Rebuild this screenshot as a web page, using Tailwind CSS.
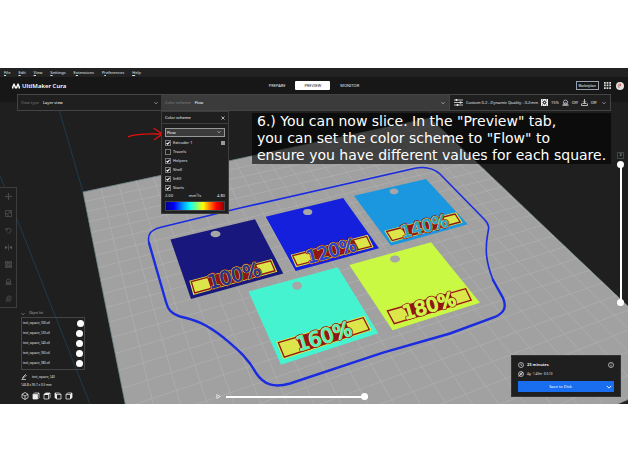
<!DOCTYPE html>
<html lang="en">
  <head>
    <meta charset="UTF-8" />
    <meta name="viewport" content="width=device-width, initial-scale=1.0" />
    <title>UltiMaker Cura</title>
    <script src="https://cdn.jsdelivr.net/npm/@tailwindcss/browser@4"></script>
  </head>
  <body class="flex h-screen flex-col overflow-hidden bg-white py-17 font-['Noto_Sans',sans-serif] text-[4px]/[6px] text-gray-200">
    <!-- shared icon shapes -->
    <svg class="hidden">
      <symbol id="chevron" viewBox="0 0 8 8"><path d="M1 2.5 4 5.5 7 2.5" fill="none" stroke="currentColor" stroke-width="1.2" /></symbol>
      <symbol id="check" viewBox="0 0 8 8"><path d="M2 4 3.5 5.6 6.2 2.3" fill="none" stroke="currentColor" stroke-width="1.4" /></symbol>
      <symbol id="support" viewBox="0 0 16 16"><path d="M4 10.5a5 5 0 1 1 8 0M1.5 14.5 4 10.5h2.5v-2h3v2H12l2.5 4zM5 14.5v-2h6v2" fill="none" stroke="currentColor" stroke-width="1.5" /></symbol>
    </svg>

    <div class="relative flex min-h-0 flex-1 flex-col overflow-hidden bg-[#1f1f1f]">
      <!-- build plate -->
      <svg class="absolute inset-0 size-full" viewBox="0 68 628 336" preserveAspectRatio="xMidYMid slice">
        <defs>
          <clipPath id="plate"><path d="M83 192 430 118 695 370 165 604Z" /></clipPath>
        </defs>
        <g stroke="#1d4356" stroke-width=".8" fill="none">
          <path d="M0 176 90 404M58 106 83 192M430 106v12" />
        </g>
        <path d="M83 192 430 118 695 370 165 604Z" fill="#a1a1a1" stroke="#6f878b" stroke-width=".8" />
        <g id="grid" clip-path="url(#plate)" stroke="#aeaeae" stroke-width=".8"></g>

        <g fill="none" stroke="#1a2be0" stroke-linecap="round">
          <path stroke-width="1.6" d="M149 243C147 234 151 230 160 227.5L240 208 414 168.5C425 166 433 168 440 174L484 219C490 225 489 228 487.5 235C485 250 486 262 493 280" />
          <path stroke-width="2.4" d="M493 280 503 298C507 307 504 313 495 317L450 333.5 383 352.7 290 383.5C274 388 264 385 256 373C248 358 238 350 224 338C205 323 195 320 180 316.5C170 313 168 309 166 302L149 243" />
        </g>

        <path d="M170.5 239.5 255 219.3 283.3 273.5 191 299Z" fill="#17177d" />
        <path d="M265.7 216.7 343.2 198 379 248.3 295.6 271Z" fill="#1520dc" />
        <path d="M354 195.7 426 179 467.7 224.3 391 245.7Z" fill="#1b97df" />
        <path d="M248.5 291.5 337.7 267.3 378.3 333.3 281 364.7Z" fill="#45f3d0" />
        <path d="M349.3 265 431 242.3 480 302.7 392.5 330.3Z" fill="#c9f943" />
        <g fill="#a6a6a6">
          <ellipse cx="215.5" cy="234" rx="5" ry="3.3" />
          <ellipse cx="307.7" cy="212" rx="4.6" ry="3.1" />
          <ellipse cx="394" cy="191.3" rx="4.3" ry="2.9" />
          <ellipse cx="297" cy="285.7" rx="4.8" ry="4" />
          <ellipse cx="395" cy="259" rx="5" ry="3.5" />
        </g>

        <!-- label strips: yellow base, red inset line, red block behind the digits -->
        <g fill="#dce64a">
          <path d="M189.3 280.7 271.7 259 277.3 271.7 193.3 295Z" />
          <path d="M290.7 254.7 367.6 234.7 373.6 247.3 296 267.3Z" />
          <path d="M384.3 230.7 456 212.3 462.7 222.7 391.3 242.3Z" />
          <path d="M276 341.7 364.3 315.7 371.7 330.3 283.3 359.3Z" />
          <path d="M385 310 466.6 286.7 473.8 301 393.3 325.5Z" />
        </g>
        <g fill="none" stroke="#8f1613" stroke-width="1.3">
          <path d="M191.3 281.7 270.7 260.8 275 270.7 194.7 293Z" />
          <path d="M292.7 255.7 366.6 236.4 371.3 246.3 297.2 265.3Z" />
          <path d="M386.6 231.5 455 214 460.2 222 392.2 240.6Z" />
          <path d="M278.3 342.6 363.3 317.7 369.3 329.5 284.3 357.2Z" />
          <path d="M387.4 311 465.6 288.7 471.2 300.1 394.3 323.6Z" />
        </g>
        <g fill="#8f1613">
          <path d="M207 277 256 264.5 261 275 211 288.5Z" />
          <path d="M309 251.5 354 240 359 249.5 314 261.5Z" />
          <path d="M401 228 443 217 448 225.5 407 236.5Z" />
          <path d="M296 337.5 346 323 352 335.5 302 351Z" />
          <path d="M403 306.5 450 293 456 305 410 319Z" />
        </g>
        <g class="font-['DejaVu_Sans',sans-serif]" text-anchor="middle" paint-order="stroke" stroke-linejoin="round">
          <g id="labels"></g>
        </g>

        <!-- pointer to the drop-down -->
        <path d="M128.5 136.7C138 133 150 134 162 134M154 128.5 162.5 134 154.5 139.5" fill="none" stroke="#e01010" stroke-width="1.4" stroke-linecap="round" />
      </svg>

      <nav class="relative flex h-[9px] shrink-0 items-center gap-2 bg-[#222] px-1">
        <a href="#"><u>F</u>ile</a>
        <a href="#"><u>E</u>dit</a>
        <a href="#"><u>V</u>iew</a>
        <a href="#"><u>S</u>ettings</a>
        <a href="#">E<u>x</u>tensions</a>
        <a href="#">P<u>r</u>eferences</a>
        <a href="#"><u>H</u>elp</a>
      </nav>

      <header class="relative grid h-[25px] shrink-0 grid-cols-[1fr_auto_1fr] items-center bg-[#171717] px-1 pb-2">
        <div class="flex items-center gap-0.5 pl-2 text-[6px]/[8px] font-semibold text-white">
          <svg class="h-[6px] w-2" viewBox="0 0 16 12"><path d="M0 11V8L3 1h2l3 7 3-7h2l3 7v3h-3V8l-1-2-2 5H6L4 6 3 8v3z" fill="#fff" /></svg>
          UltiMaker Cura
        </div>
        <div class="flex items-center gap-[10px]">
          <button>PREPARE</button>
          <button class="h-[9px] rounded-[1px] bg-white px-[9px] text-[#222]">PREVIEW</button>
          <button>MONITOR</button>
        </div>
        <div class="flex items-center justify-end gap-[5px]">
          <button class="h-[9px] border border-gray-400 px-0.5 text-[3px]/[6px] text-white">Marketplace</button>
          <button aria-label="Apps">
            <svg class="size-[7px]" viewBox="0 0 14 14" fill="#ddd"><path d="M0 0h3.5v3.5H0zM5.2 0h3.5v3.5H5.2zM10.5 0H14v3.5h-3.5zM0 5.2h3.5v3.5H0zM5.2 5.2h3.5v3.5H5.2zM10.5 5.2H14v3.5h-3.5zM0 10.5h3.5V14H0zM5.2 10.5h3.5V14H5.2zM10.5 10.5H14V14h-3.5z" /></svg>
          </button>
          <button aria-label="Account">
            <svg class="size-2" viewBox="0 0 16 16"><circle cx="8" cy="8" r="8" fill="#e5e2df" /><path d="M3 6c2-4 6-4 7-1L7 9l1 4-4-2z" fill="#b9a199" /><path d="M8 2l2 5-2 1z" fill="#d33" /></svg>
          </button>
        </div>
      </header>

      <div class="relative z-10 mx-[17px] -mt-2 flex h-[17px] shrink-0 border border-[#444] bg-[#1f1f1f]">
        <button class="flex w-[143px] items-center gap-1 px-[3px]">
          <span class="text-[#777]">View type</span>
          <span class="text-white">Layer view</span>
          <svg class="ml-auto size-1"><use href="#chevron" /></svg>
        </button>
        <div class="relative flex flex-1 bg-[#3b3b3b]">
          <button class="flex flex-1 items-center gap-1 px-1">
            <span class="text-[#858585]">Color scheme</span>
            <span class="text-white">Flow</span>
            <svg class="ml-auto size-1"><use href="#chevron" /></svg>
          </button>

          <div class="absolute top-full left-0 mt-px w-17 border border-[#3d3d3d] bg-[#1f1f1f] pb-0.5">
            <div class="flex h-3 items-center justify-between border-b border-[#3d3d3d] px-[3px]">
              <span class="text-white">Color scheme</span>
              <button aria-label="Close"><svg class="size-1" viewBox="0 0 8 8"><path d="M1 1l6 6M7 1 1 7" stroke="#ddd" stroke-width="1.5" /></svg></button>
            </div>
            <div class="flex flex-col px-[3px] pt-1">
              <div class="relative mb-px h-[9px]">
                <select aria-label="Color scheme" class="block size-full appearance-none border border-[#999] bg-[#3b3b3b] px-px text-[4px]/[6px] text-white">
                  <option>Flow</option>
                </select>
                <svg class="pointer-events-none absolute top-[2px] right-1 size-1"><use href="#chevron" /></svg>
              </div>
              <label class="flex h-[9px] items-center gap-0.5">
                <span class="relative size-1.5"><input type="checkbox" checked class="peer block size-1.5 appearance-none border border-[#777]" /><svg class="pointer-events-none absolute inset-0 hidden size-1.5 text-white peer-checked:block"><use href="#check" /></svg></span>
                Extruder 1
                <span class="ml-auto size-1 bg-[#999]"></span>
              </label>
              <label class="flex h-[9px] items-center gap-0.5">
                <span class="relative size-1.5"><input type="checkbox" class="peer block size-1.5 appearance-none border border-[#777]" /><svg class="pointer-events-none absolute inset-0 hidden size-1.5 text-white peer-checked:block"><use href="#check" /></svg></span>
                Travels
              </label>
              <label class="flex h-[9px] items-center gap-0.5">
                <span class="relative size-1.5"><input type="checkbox" checked class="peer block size-1.5 appearance-none border border-[#777]" /><svg class="pointer-events-none absolute inset-0 hidden size-1.5 text-white peer-checked:block"><use href="#check" /></svg></span>
                Helpers
              </label>
              <label class="flex h-[9px] items-center gap-0.5">
                <span class="relative size-1.5"><input type="checkbox" checked class="peer block size-1.5 appearance-none border border-[#777]" /><svg class="pointer-events-none absolute inset-0 hidden size-1.5 text-white peer-checked:block"><use href="#check" /></svg></span>
                Shell
              </label>
              <label class="flex h-[9px] items-center gap-0.5">
                <span class="relative size-1.5"><input type="checkbox" checked class="peer block size-1.5 appearance-none border border-[#777]" /><svg class="pointer-events-none absolute inset-0 hidden size-1.5 text-white peer-checked:block"><use href="#check" /></svg></span>
                Infill
              </label>
              <label class="flex h-[9px] items-center gap-0.5">
                <span class="relative size-1.5"><input type="checkbox" checked class="peer block size-1.5 appearance-none border border-[#777]" /><svg class="pointer-events-none absolute inset-0 hidden size-1.5 text-white peer-checked:block"><use href="#check" /></svg></span>
                Starts
              </label>
              <div class="flex h-[7px] items-center justify-between">
                <span>2.00</span>
                <span>mm³/s</span>
                <span>4.80</span>
              </div>
              <div class="mt-0.5 h-[10px] border border-[#444] bg-[linear-gradient(90deg,#000090,#0000ff_14%,#00a0ff_30%,#10ffee_42%,#90ff70_54%,#ffff00_64%,#ff8000_75%,#ff0000_87%,#900000)]"></div>
            </div>
          </div>
        </div>
        <button class="flex w-[161px] items-center gap-[3px] border-l border-[#444] px-1">
          <svg class="h-[7px] w-[9px] shrink-0" viewBox="0 0 18 14" stroke="#eee" stroke-width="1.5" fill="none"><path d="M0 2h18M0 7h18M0 12h18" /><path d="M5 0v4M13 5v4M7 10v4" stroke-width="3" /></svg>
          <span class="whitespace-nowrap">Custom 0.2 - Dynamic Quality - 0.2mm</span>
          <svg class="size-[7px] shrink-0" viewBox="0 0 14 14"><path d="M0 0h14v14H0z" fill="#eee" /><path d="M7 2.5 11.5 7 7 11.5 2.5 7z" fill="#222" /><circle cx="7" cy="7" r="1.5" fill="#eee" /><path d="M2 2h2M10 2h2M2 12h2M10 12h2" stroke="#222" stroke-width="1.5" /></svg>
          <span>15%</span>
          <svg class="size-[7px] shrink-0"><use href="#support" /></svg>
          <span>Off</span>
          <svg class="size-[7px] shrink-0" viewBox="0 0 14 14" fill="none" stroke="#eee" stroke-width="1.5"><path d="M7 0v7M4 4.5l3 3 3-3M3 9h8M1 9v4h12V9" /></svg>
          <span>Off</span>
          <svg class="ml-auto size-1 shrink-0"><use href="#chevron" /></svg>
        </button>
      </div>

      <p class="absolute top-[45px] left-[252px] bg-black/60 px-[5px] font-['DejaVu_Sans',sans-serif] text-[14px]/[17px] whitespace-nowrap text-white">
        6.) You can now slice. In the "Preview" tab,<br />
        you can set the color scheme to "Flow" to<br />
        ensure you have different values for each square.
      </p>

      <!-- tools -->
      <div class="absolute top-[119px] left-0 flex w-[17px] flex-col border border-l-0 border-[#3d3d3d] bg-[#1f1f1f] text-[#5c5c5c]">
        <button aria-label="Move" class="grid h-[17px] place-items-center"><svg class="size-[7px]" viewBox="0 0 16 16" fill="none" stroke="currentColor" stroke-width="1.5"><path d="M8 1v14M1 8h14M6 3l2-2 2 2M6 13l2 2 2-2M3 6 1 8l2 2M13 6l2 2-2 2" /></svg></button>
        <button aria-label="Scale" class="grid h-[17px] place-items-center"><svg class="size-[7px]" viewBox="0 0 16 16" fill="none" stroke="currentColor" stroke-width="1.5"><path d="M1 1h14v14H1zM1 9h6v6M8 8l4-4M8.500 4H12v3.500" /></svg></button>
        <button aria-label="Rotate" class="grid h-[17px] place-items-center"><svg class="size-[7px]" viewBox="0 0 16 16" fill="none" stroke="currentColor" stroke-width="1.5"><path d="M2 2v5h5M2.500 6.500A6 6 0 0 1 14 8a6 6 0 0 1-5 6" /><path d="M9 14a6 6 0 0 1-6-4" stroke-dasharray="1.5 1.5" /></svg></button>
        <button aria-label="Mirror" class="grid h-[17px] place-items-center"><svg class="size-[7px]" viewBox="0 0 16 16" fill="currentColor"><path d="M0 4l6 4-6 4zM16 4l-6 4 6 4zM7.300 1h1.400v14H7.300z" /></svg></button>
        <button aria-label="Per model settings" class="grid h-[17px] place-items-center"><svg class="size-[7px]" viewBox="0 0 16 16" fill="none" stroke="currentColor" stroke-width="1.5"><path d="M1 1h6v6H1zM9 1h6v6H9zM1 9h6v6H1zM9 9h6v6H9zM1 4h6M9 4h6M4 9v6M9 12h6" /></svg></button>
        <button aria-label="Support blocker" class="grid h-[17px] place-items-center"><svg class="size-[7px]"><use href="#support" /></svg></button>
        <button aria-label="Paint support" class="grid h-[17px] place-items-center"><svg class="size-[7px]" viewBox="0 0 16 16" fill="none" stroke="currentColor" stroke-width="1.5"><path d="M2 14 5 9a5 5 0 0 1 5-7M2 14h10l-2-4M7 11l-1-3 6-6 3 3-6 5zM13 8l2 3" /></svg></button>
      </div>

      <!-- object list -->
      <div class="absolute bottom-[4px] left-[21px] flex w-16 flex-col text-[3px]/[5px]">
        <button class="flex h-[7px] items-center gap-1 text-[#aaa]">
          <svg class="size-1"><use href="#chevron" /></svg>
          Object list
        </button>
        <ul class="flex h-[53px] flex-col border border-[#444] pl-px">
          <li class="flex flex-1 items-center justify-between">test_square_100.stl <span class="size-[7px] rounded-full bg-white"></span></li>
          <li class="flex flex-1 items-center justify-between pr-px">test_square_120.stl <span class="size-[7px] rounded-full bg-white"></span></li>
          <li class="flex flex-1 items-center justify-between pr-px">test_square_140.stl <span class="size-[7px] rounded-full bg-white"></span></li>
          <li class="flex flex-1 items-center justify-between pr-px">test_square_160.stl <span class="size-[7px] rounded-full bg-white"></span></li>
          <li class="flex flex-1 items-center justify-between pr-px">test_square_180.stl <span class="size-[7px] rounded-full bg-white"></span></li>
        </ul>
        <div class="mt-[3px] flex h-2 items-center gap-[5px]">
          <svg class="size-[6px]" viewBox="0 0 12 12" fill="none" stroke="#eee" stroke-width="1.5"><path d="M1 11.200h9M3 9l1-3 5-5 1.500 1.500-5 5z" /></svg>
          test_square_140
        </div>
        <div class="flex h-2 items-center">146.8 x 95.7 x 0.5 mm</div>
        <div class="mt-[3px] flex gap-[3px]">
          <button aria-label="3D view"><svg class="size-2" viewBox="0 0 16 16" fill="none" stroke="#eee" stroke-width="1.5"><path d="M8 1l6 3.500v7L8 15l-6-3.500v-7zM2 4.500 8 8l6-3.500M8 8v7" /></svg></button>
          <button aria-label="Front view"><svg class="size-2" viewBox="0 0 16 16" fill="none" stroke="#eee" stroke-width="1.5"><path d="M2 5 5 2h9v9l-3 3M11 5l3-3" /><path d="M2 5h9v9H2z" fill="#eee" /></svg></button>
          <button aria-label="Top view"><svg class="size-2" viewBox="0 0 16 16" fill="none" stroke="#eee" stroke-width="1.5"><path d="M2 5h9v9H2zM14 2v9l-3 3" /><path d="M2 5 5 2h9l-3 3z" fill="#eee" /></svg></button>
          <button aria-label="Left view"><svg class="size-2" viewBox="0 0 16 16" fill="none" stroke="#eee" stroke-width="1.5"><path d="M5 5h9v9H5zM2 2h9l3 3" /><path d="M2 2l3 3v9l-3-3z" fill="#eee" /></svg></button>
          <button aria-label="Right view"><svg class="size-2" viewBox="0 0 16 16" fill="none" stroke="#eee" stroke-width="1.5"><path d="M2 5h9v9H2zM2 5l3-3h9" /><path d="M14 2l-3 3v9l3-3z" fill="#eee" /></svg></button>
        </div>
      </div>

      <!-- path slider -->
      <div class="absolute bottom-1 left-[216px] flex h-[7px] w-[152px] items-center gap-[5px]">
        <button aria-label="Play"><svg class="size-[5px]" viewBox="0 0 10 10"><path d="M1.500 1 8.500 5 1.500 9z" fill="none" stroke="#fff" stroke-width="1.3" /></svg></button>
        <div class="relative flex flex-1 items-center">
          <div class="absolute inset-x-0 h-[2px] bg-white"></div>
          <input type="range" value="100" aria-label="Path position" class="relative block h-[7px] w-full appearance-none bg-transparent [&::-webkit-slider-thumb]:size-[7px] [&::-webkit-slider-thumb]:appearance-none [&::-webkit-slider-thumb]:rounded-full [&::-webkit-slider-thumb]:bg-white" />
        </div>
      </div>

      <!-- layer slider -->
      <div class="absolute top-[84px] right-1 flex h-[154px] w-[7px] flex-col gap-[2px]">
        <output class="grid h-[7px] place-items-center border border-[#444] text-[3px]/[5px]">2</output>
        <div class="relative flex-1">
          <div class="absolute inset-y-0.5 left-[3px] w-[2px] bg-white"></div>
          <input type="range" value="0" aria-label="Top layer" class="absolute inset-0 h-full w-[7px] appearance-none bg-transparent [writing-mode:vertical-lr] [&::-webkit-slider-thumb]:size-[7px] [&::-webkit-slider-thumb]:appearance-none [&::-webkit-slider-thumb]:rounded-full [&::-webkit-slider-thumb]:bg-white" />
          <input type="range" value="100" aria-label="Bottom layer" class="absolute inset-0 h-full w-[7px] appearance-none bg-transparent [writing-mode:vertical-lr] [&::-webkit-slider-thumb]:size-[7px] [&::-webkit-slider-thumb]:appearance-none [&::-webkit-slider-thumb]:rounded-full [&::-webkit-slider-thumb]:bg-white" />
        </div>
      </div>

      <!-- print summary -->
      <div class="absolute right-[7px] bottom-[7px] flex w-[110px] flex-col border border-[#333] bg-[#1f1f1f] px-1.5 pt-1 pb-1">
        <div class="flex h-[9px] items-center gap-[3px] font-semibold text-white">
          <svg class="size-1.5" viewBox="0 0 12 12" fill="none" stroke="#eee" stroke-width="1.3"><circle cx="6" cy="6" r="5" /><path d="M6 3v3.500h2.500" /></svg>
          23 minutes
          <svg class="ml-auto size-1.5" viewBox="0 0 12 12" fill="none" stroke="#eee" stroke-width="1.3"><circle cx="6" cy="6" r="5" /><path d="M6 5.500V9M6 3v1.300" /></svg>
        </div>
        <div class="flex h-[10px] items-center gap-[3px] text-[3px]/[5px]">
          <svg class="size-1.5" viewBox="0 0 12 12" fill="none" stroke="#eee" stroke-width="1.3"><circle cx="6" cy="6" r="5" /><circle cx="6" cy="6" r="2" /><path d="M1 11 10 2" /></svg>
          4g · 1.43m · $ 0.10
        </div>
        <div class="mt-0.5 flex h-[11px] bg-[#196ef0] text-white">
          <button class="flex-1">Save to Disk</button>
          <button aria-label="More outputs" class="grid w-[11px] place-items-center"><svg class="size-1.5"><use href="#chevron" /></svg></button>
        </div>
      </div>
    </div>
  </body>
  <script>
    const svgNs = 'http://www.w3.org/2000/svg';
    const grid = document.getElementById('grid');
    const labels = document.getElementById('labels');

    // perspective: plate cell (u, v) to scene coordinates
    function project(u, v) {
      const a = u * 0.0093;
      const b = v * -0.019;
      const w = 1 + a + b;
      return [(83 + a * 2040 - b * 17) / w, (192 - a * 225 - b * 300) / w];
    }

    function addLine(from, to) {
      const line = document.createElementNS(svgNs, 'line');
      line.setAttribute('x1', from[0]);
      line.setAttribute('y1', from[1]);
      line.setAttribute('x2', to[0]);
      line.setAttribute('y2', to[1]);
      grid.appendChild(line);
    }

    for (let i = 1; i < 24; i++) {
      addLine(project(i, 0), project(i, 24));
      addLine(project(0, i), project(24, i));
    }

    const squares = [
      { text: '100%', x: 236, y: 282, size: 19, angle: -15, fill: '#2a2f8c' },
      { text: '120%', x: 333, y: 257, size: 18, angle: -15, fill: '#2a3fd0' },
      { text: '140%', x: 426, y: 232, size: 17, angle: -15, fill: '#2b9fd0' },
      { text: '160%', x: 326, y: 343, size: 20, angle: -17, fill: '#55efc0' },
      { text: '180%', x: 431, y: 312, size: 19, angle: -16, fill: '#cdf64a' },
    ];

    // each label is stacked from its widest outline to its core
    squares.forEach(({ text, x, y, size, angle, fill }) => {
      [['#8f1613', 3], ['#d8d84a', 1.6], [fill, 0.6]].forEach(([stroke, width]) => {
        const label = document.createElementNS(svgNs, 'text');
        label.textContent = text;
        label.setAttribute('transform', `translate(${x} ${y}) rotate(${angle})`);
        label.setAttribute('font-size', size);
        label.setAttribute('fill', fill);
        label.setAttribute('stroke', stroke);
        label.setAttribute('stroke-width', width);
        if (width !== 0.6) label.setAttribute('aria-hidden', 'true');
        labels.appendChild(label);
      });
    });
  </script>
</html>
